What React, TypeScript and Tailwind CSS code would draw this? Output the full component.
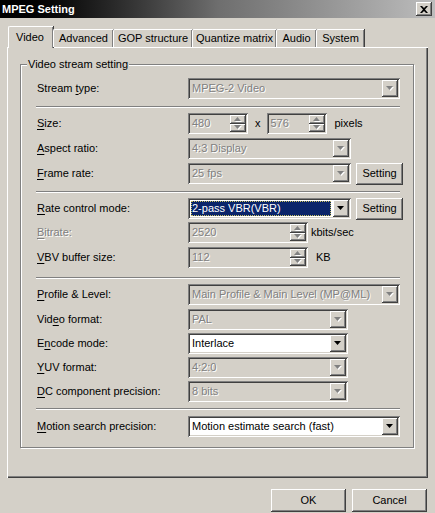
import React from 'react';

const SUNKEN = 'shadow-[inset_1px_1px_0_#808080,inset_-1px_-1px_0_#ffffff,inset_2px_2px_0_#404040,inset_-2px_-2px_0_#d4d0c8]';
const RAISED = 'shadow-[inset_-1px_-1px_0_#404040,inset_1px_1px_0_#ffffff,inset_-2px_-2px_0_#808080]';
const DIS = 'text-[#808080] [text-shadow:1px_1px_0_#ffffff]';

const Mn: React.FC<{ text: string; at: number; disabled?: boolean }> = ({ text, at, disabled }) => (
  <span className={disabled ? DIS : 'text-black'}>
    {text.slice(0, at)}
    <span className="underline underline-offset-2">{text[at]}</span>
    {text.slice(at + 1)}
  </span>
);

const Arrow: React.FC<{ disabled?: boolean; up?: boolean }> = ({ disabled, up }) => (
  <svg width="8" height="5" viewBox="0 0 8 5" className="overflow-visible">
    {disabled && <polygon points={up ? '1,5 8,5 4.5,1' : '1,1 8,1 4.5,5'} fill="#ffffff" />}
    <polygon points={up ? '0,4 7,4 3.5,0' : '0,0 7,0 3.5,4'} fill={disabled ? '#808080' : '#000000'} />
  </svg>
);

const Combo: React.FC<{ value: string; width: string; disabled?: boolean; selected?: boolean }> = ({ value, width, disabled, selected }) => (
  <div className={`${width} h-[21px] flex p-[2px] ${SUNKEN} ${disabled ? 'bg-[#d4d0c8]' : 'bg-white'}`}>
    <div className="flex-1 flex items-center pl-px pr-[2px] overflow-hidden">
      {selected ? (
        <div className="w-full h-[15px] bg-[#0a246a] text-white flex items-center pl-[1px] outline outline-1 outline-dotted outline-[#c8c060] -outline-offset-1 whitespace-nowrap">
          {value}
        </div>
      ) : (
        <span className={`whitespace-nowrap pl-px ${disabled ? DIS : 'text-black'}`}>{value}</span>
      )}
    </div>
    <div className={`w-[16px] h-full bg-[#d4d0c8] flex items-center justify-center ${RAISED}`}>
      <Arrow disabled={disabled} />
    </div>
  </div>
);

const Spin: React.FC<{ value: string; width: string }> = ({ value, width }) => (
  <div className={`${width} h-[21px] flex p-[2px] bg-[#d4d0c8] ${SUNKEN}`}>
    <div className={`flex-1 flex items-center pl-[2px] ${DIS}`}>{value}</div>
    <div className="w-[16px] h-full flex flex-col">
      <div className={`flex-1 bg-[#d4d0c8] flex items-center justify-center ${RAISED}`}>
        <Arrow disabled up />
      </div>
      <div className={`flex-1 bg-[#d4d0c8] flex items-center justify-center ${RAISED}`}>
        <Arrow disabled />
      </div>
    </div>
  </div>
);

const Btn: React.FC<{ label: string; className: string }> = ({ label, className }) => (
  <div className={`bg-[#d4d0c8] flex items-center justify-center text-black shadow-[inset_-1px_-1px_0_#404040,inset_1px_1px_0_#ffffff,inset_-2px_-2px_0_#808080] ${className}`}>
    {label}
  </div>
);

const Row: React.FC<{ className?: string; label: React.ReactNode; children: React.ReactNode }> = ({ className, label, children }) => (
  <div className={`h-[21px] flex items-center ${className || ''}`}>
    <div className="w-[167px] pl-[16px] whitespace-nowrap">{label}</div>
    {children}
  </div>
);

const Sep: React.FC<{ className: string }> = ({ className }) => (
  <div className={`ml-[15px] w-[364px] h-[2px] border-t border-[#808080] border-b border-b-white ${className}`} />
);

const tabs = [
  { name: 'Advanced', w: 'w-[60px]' },
  { name: 'GOP structure', w: 'w-[79px]' },
  { name: 'Quantize matrix', w: 'w-[84px]' },
  { name: 'Audio', w: 'w-[40px]' },
  { name: 'System', w: 'w-[48px]' },
];

export default function App() {
  return (
    <div className="w-[435px] h-[513px] overflow-hidden bg-[#d4d0c8] text-[11px] leading-none font-['Liberation_Sans',Arial,sans-serif] text-black select-none">
      {/* title bar */}
      <div className="h-[18px] flex items-center justify-between bg-gradient-to-r from-black via-[#6e6e6e] to-[#bdbdbd] pl-[2px] pr-[3px]">
        <span className="text-white font-bold text-[11px]">MPEG Setting</span>
        <div className={`w-[16px] h-[14px] bg-[#d4d0c8] flex items-center justify-center ${RAISED}`}>
          <svg width="8" height="7" viewBox="0 0 8 7">
            <path d="M0 0h2l2 2 2-2h2L5 3.5 8 7H6L4 5 2 7H0l3-3.5z" fill="#000" />
          </svg>
        </div>
      </div>

      {/* tabs */}
      <div className="mt-[8px] h-[21px] flex items-end pl-[8px] relative z-10">
        <div className="w-[45px] h-[22px] -mb-px bg-[#d4d0c8] flex items-center pl-[7px] border-l border-t border-white rounded-tl-[2px] shadow-[inset_-1px_0_0_#808080,1px_0_0_#404040]">
          Video
        </div>
        {tabs.map(t => (
          <div key={t.name} className={`${t.w} h-[18px] flex items-center justify-center border-l border-t border-white rounded-tl-[2px] shadow-[inset_-1px_0_0_#808080,1px_0_0_#404040] whitespace-nowrap`}>
            {t.name}
          </div>
        ))}
      </div>

      {/* tab panel */}
      <div className="ml-[7px] w-[421px] h-[431px] pt-[17px] pl-[13px] shadow-[inset_1px_1px_0_#ffffff,inset_-1px_-1px_0_#404040,inset_-2px_-2px_0_#808080]">
        <div className="relative w-[394px] h-[384px] border border-[#808080] shadow-[inset_1px_1px_0_#ffffff,1px_1px_0_#ffffff] pt-[13px]">
          <span className="absolute -top-[6px] left-[6px] px-px bg-[#d4d0c8] leading-[11px]">Video stream setting</span>

          <Row label={<Mn text="Stream type:" at={7} />}>
            <Combo value="MPEG-2 Video" width="w-[212px]" disabled />
          </Row>
          <Sep className="mt-[7px]" />

          <Row className="mt-[5px]" label={<Mn text="Size:" at={0} />}>
            <Spin value="480" width="w-[60px]" />
            <span className="ml-[7px]">x</span>
            <div className="ml-[6px]"><Spin value="576" width="w-[60px]" /></div>
            <span className="ml-[8px]">pixels</span>
          </Row>
          <Row className="mt-[4px]" label={<Mn text="Aspect ratio:" at={0} />}>
            <Combo value="4:3 Display" width="w-[163px]" disabled />
          </Row>
          <Row className="mt-[4px]" label={<Mn text="Frame rate:" at={0} />}>
            <Combo value="25 fps" width="w-[163px]" disabled />
            <Btn label="Setting" className="ml-[5px] w-[47px] h-[22px]" />
          </Row>
          <Sep className="mt-[7px]" />

          <Row className="mt-[5px]" label={<Mn text="Rate control mode:" at={0} />}>
            <Combo value="2-pass VBR(VBR)" width="w-[163px]" selected />
            <Btn label="Setting" className="ml-[5px] w-[47px] h-[22px]" />
          </Row>
          <Row className="mt-[3px]" label={<Mn text="Bitrate:" at={0} disabled />}>
            <Spin value="2520" width="w-[120px]" />
            <span className="ml-[3px]">kbits/sec</span>
          </Row>
          <Row className="mt-[4px]" label={<Mn text="VBV buffer size:" at={0} />}>
            <Spin value="112" width="w-[120px]" />
            <span className="ml-[8px]">KB</span>
          </Row>
          <Sep className="mt-[9px]" />

          <Row className="mt-[5px]" label={<Mn text="Profile & Level:" at={0} />}>
            <Combo value="Main Profile & Main Level (MP@ML)" width="w-[212px]" disabled />
          </Row>
          <Row className="mt-[4px]" label={<Mn text="Video format:" at={3} />}>
            <Combo value="PAL" width="w-[160px]" disabled />
          </Row>
          <Row className="mt-[3px]" label={<Mn text="Encode mode:" at={1} />}>
            <Combo value="Interlace" width="w-[160px]" />
          </Row>
          <Row className="mt-[3px]" label={<Mn text="YUV format:" at={0} />}>
            <Combo value="4:2:0" width="w-[160px]" disabled />
          </Row>
          <Row className="mt-[3px]" label={<Mn text="DC component precision:" at={0} />}>
            <Combo value="8 bits" width="w-[160px]" disabled />
          </Row>
          <Sep className="mt-[6px]" />

          <Row className="mt-[6px]" label={<Mn text="Motion search precision:" at={0} />}>
            <Combo value="Motion estimate search (fast)" width="w-[212px]" />
          </Row>
        </div>
      </div>

      {/* buttons */}
      <div className="mt-[11px] flex justify-end gap-[6px] pr-[8px]">
        <Btn label="OK" className="w-[75px] h-[23px]" />
        <Btn label="Cancel" className="w-[75px] h-[23px]" />
      </div>
    </div>
  );
}
